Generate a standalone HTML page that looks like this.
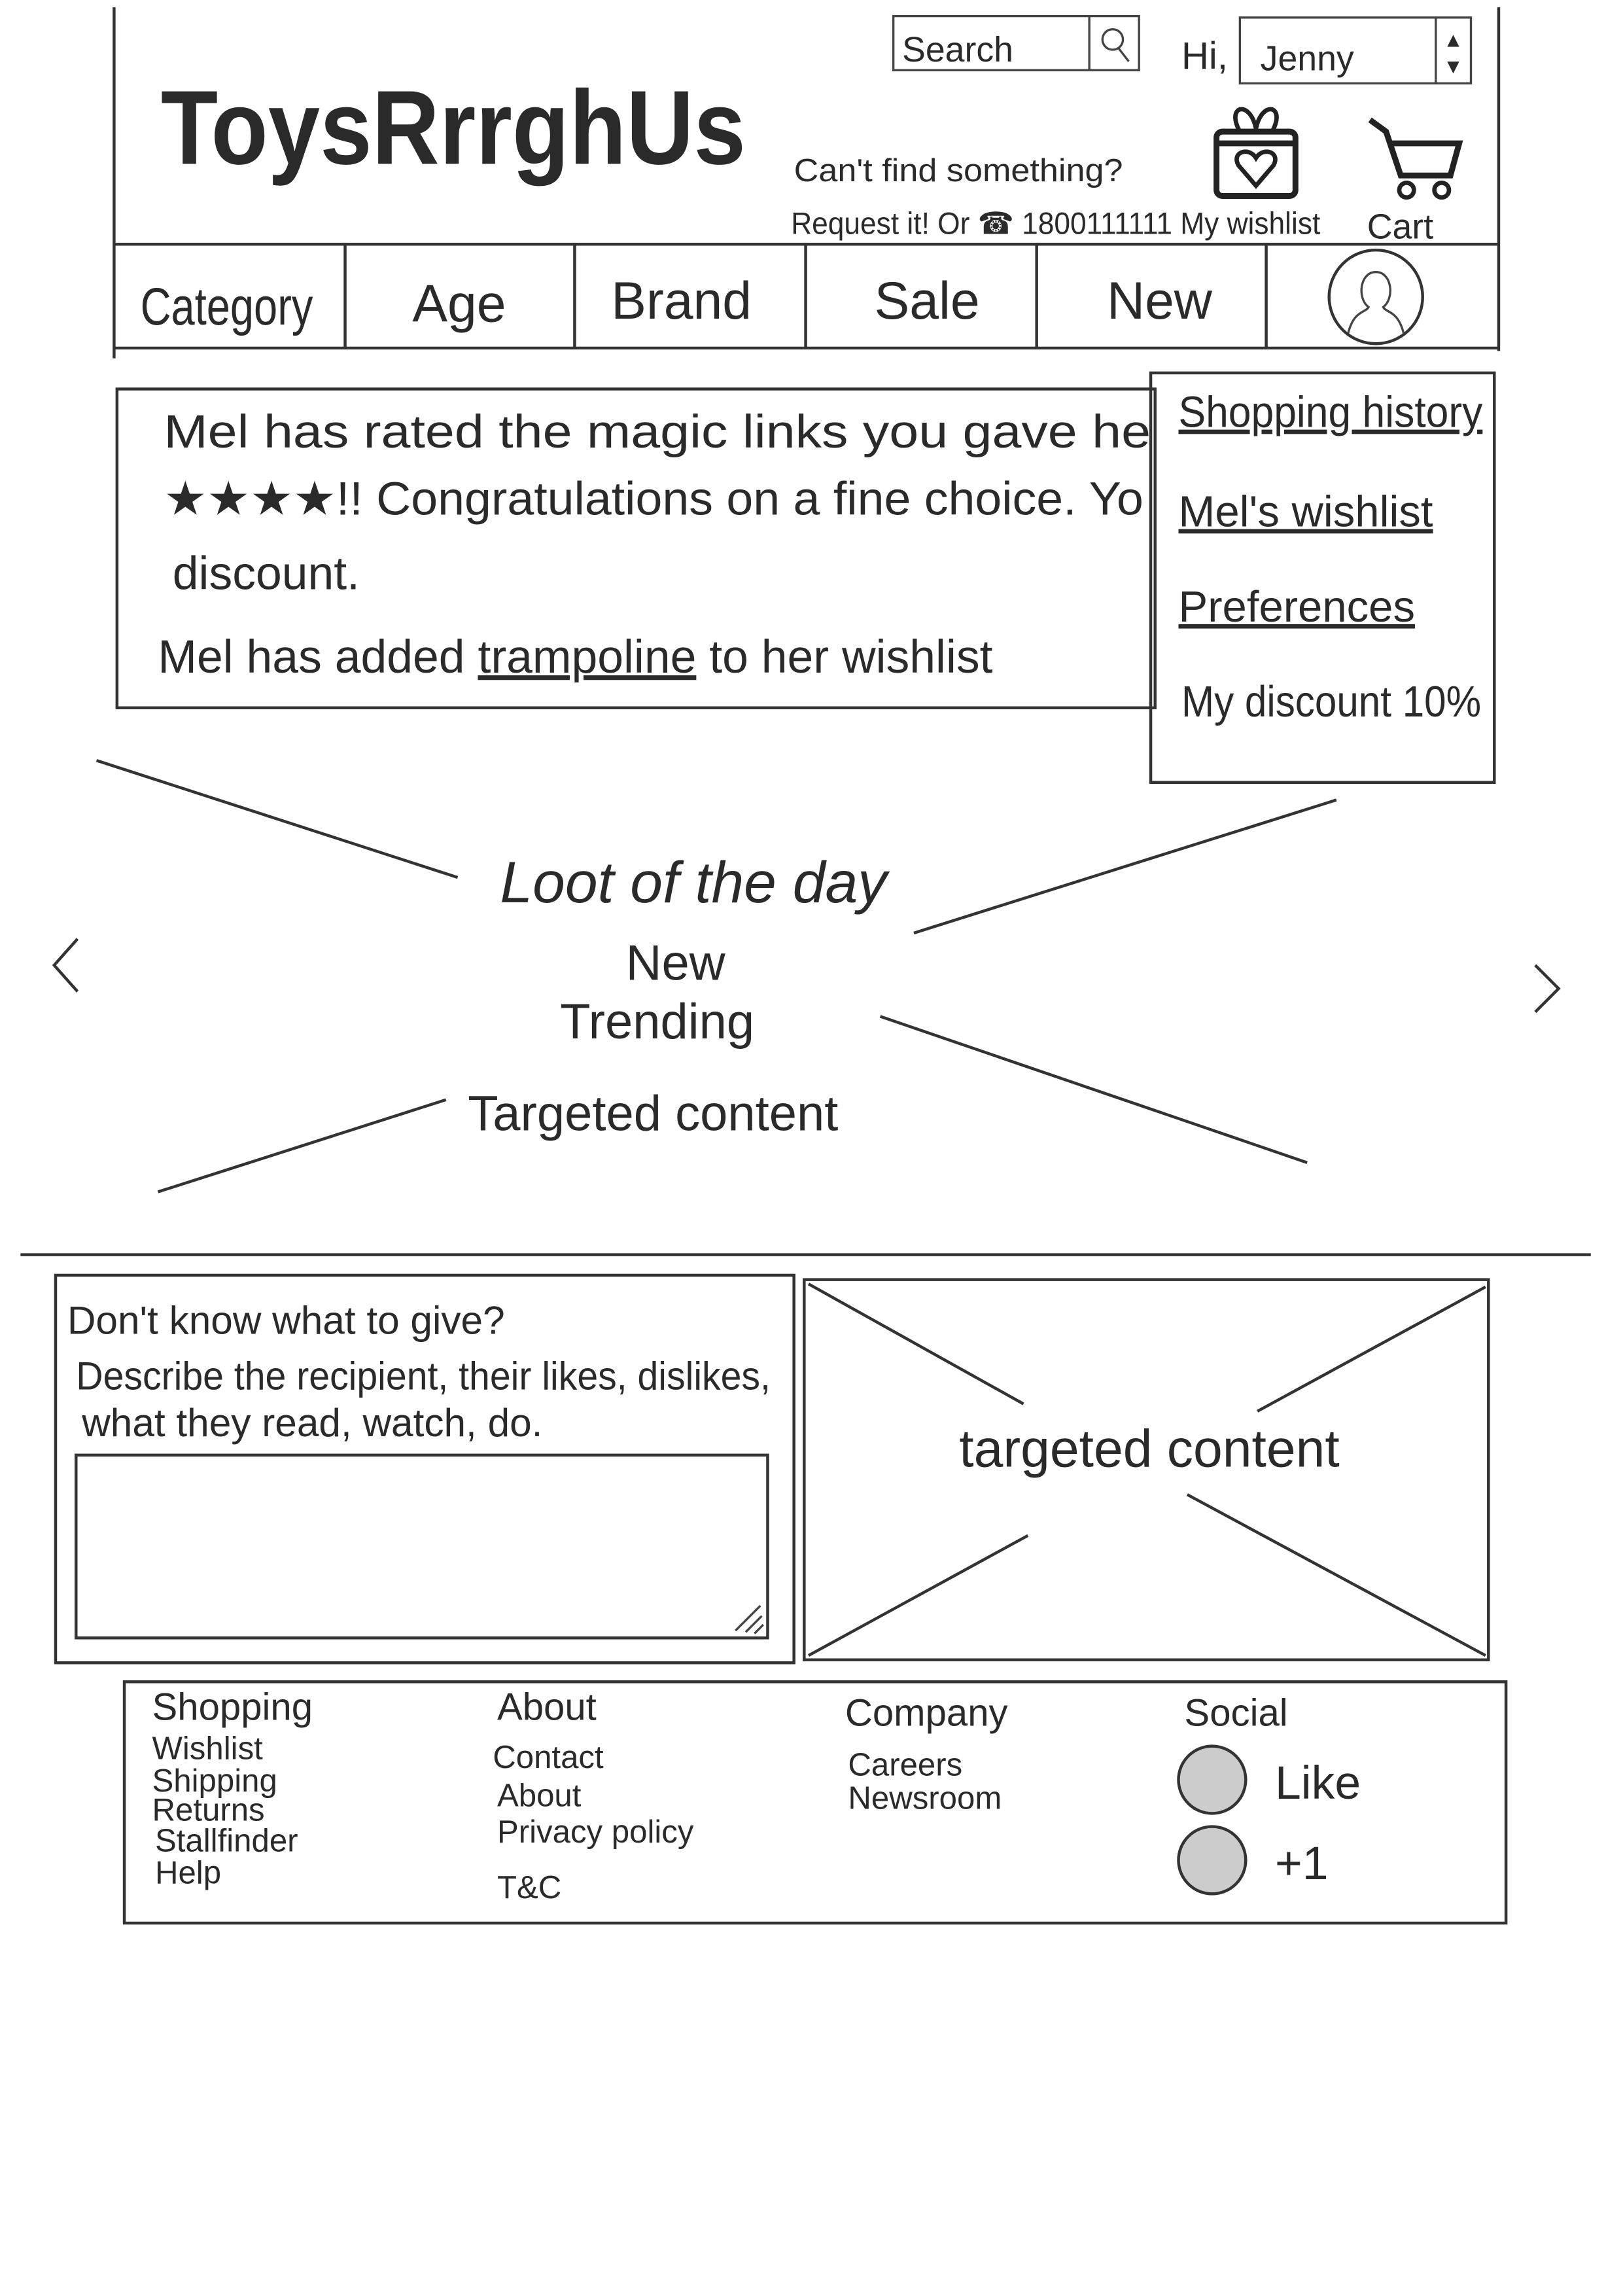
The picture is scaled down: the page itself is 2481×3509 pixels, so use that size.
<!DOCTYPE html>
<html><head><meta charset="utf-8"><style>
html,body{margin:0;padding:0;background:#fff;}
svg{display:block}
text{font-family:"Liberation Sans",sans-serif;fill:#2a2a2a}
.l{stroke:#333;stroke-width:2;fill:none}
.t{stroke:#444;stroke-width:1.5;fill:none}
</style></head><body>
<svg width="2481" height="3509" viewBox="0 0 1110 1570" xmlns="http://www.w3.org/2000/svg">
<rect width="1110" height="1570" fill="#fff"/>
<line class="l" x1="78" y1="5" x2="78" y2="245"/>
<line class="l" x1="1025" y1="5" x2="1025" y2="240"/>
<line class="l" x1="78" y1="167" x2="1025" y2="167"/>
<text x="110" y="112" font-size="72" font-weight="bold" textLength="400" lengthAdjust="spacingAndGlyphs" fill="#222">ToysRrrghUs</text>
<rect class="t" x="611" y="11" width="168" height="37"/>
<line class="t" x1="745" y1="11" x2="745" y2="48"/>
<text x="617" y="42" font-size="24">Search</text>
<circle class="t" cx="761" cy="27" r="7"/><line class="t" x1="765" y1="33" x2="772" y2="42"/>
<text x="808" y="47" font-size="26">Hi,</text>
<rect class="t" x="848" y="12" width="158" height="45"/>
<line class="t" x1="982" y1="12" x2="982" y2="57"/>
<text x="862" y="48" font-size="24">Jenny</text>
<text x="987" y="32" font-size="14">▲</text><text x="987" y="50" font-size="14">▼</text>
<text x="543" y="124" font-size="22" textLength="225" lengthAdjust="spacingAndGlyphs">Can't find something?</text>
<text x="541" y="160" font-size="21" textLength="362" lengthAdjust="spacingAndGlyphs">Request it! Or ☎ 1800111111 My wishlist</text>
<rect x="832" y="90" width="54" height="44" rx="4" fill="none" stroke="#222" stroke-width="4"/>
<line x1="832" y1="98" x2="886" y2="98" stroke="#222" stroke-width="4"/>
<path d="M848 90 C838 72 855 68 859 88 C863 68 880 72 870 90" fill="none" stroke="#222" stroke-width="3"/>
<path d="M859 127 L847 113 C842 104 854 100 859 108 C864 100 876 104 871 113 Z" fill="none" stroke="#222" stroke-width="3"/>
<path d="M937 82 L948 90 L958 120 L992 120 L998 98 L950 98" fill="none" stroke="#222" stroke-width="4"/>
<circle cx="962" cy="130" r="5" fill="none" stroke="#222" stroke-width="3"/><circle cx="986" cy="130" r="5" fill="none" stroke="#222" stroke-width="3"/>
<text x="935" y="163" font-size="24">Cart</text>
<line class="l" x1="78" y1="238" x2="1025" y2="238"/>
<g class="l"><line x1="236" y1="167" x2="236" y2="238"/><line x1="393" y1="167" x2="393" y2="238"/><line x1="551" y1="167" x2="551" y2="238"/><line x1="709" y1="167" x2="709" y2="238"/><line x1="866" y1="167" x2="866" y2="238"/></g>
<g font-size="36"><text x="96" y="222" textLength="118" lengthAdjust="spacingAndGlyphs">Category</text><text x="282" y="220">Age</text><text x="418" y="218">Brand</text><text x="598" y="218">Sale</text><text x="757" y="218">New</text></g>
<circle class="l" cx="941" cy="203" r="32"/>
<path class="t" d="M922 228 C926 212 934 214 936 210 C928 204 930 186 941 186 C952 186 954 204 946 210 C948 214 956 212 960 228"/>
<rect class="l" x="80" y="266" width="710" height="218"/>
<g font-size="32"><text x="112" y="306" textLength="675" lengthAdjust="spacingAndGlyphs">Mel has rated the magic links you gave he</text>
<text x="112" y="352" textLength="670" lengthAdjust="spacingAndGlyphs">★★★★!! Congratulations on a fine choice. Yo</text>
<text x="118" y="403">discount.</text>
<text x="108" y="460">Mel has added <tspan text-decoration="underline">trampoline</tspan> to her wishlist</text></g>
<rect class="l" x="787" y="255" width="235" height="280" fill="#fff"/>
<g font-size="30"><text x="806" y="292" text-decoration="underline" textLength="208" lengthAdjust="spacingAndGlyphs">Shopping history</text>
<text x="806" y="360" text-decoration="underline">Mel's wishlist</text>
<text x="806" y="425" text-decoration="underline">Preferences</text>
<text x="808" y="490" textLength="205" lengthAdjust="spacingAndGlyphs">My discount 10%</text></g>
<g class="l"><line x1="66" y1="520" x2="313" y2="600"/><line x1="625" y1="638" x2="914" y2="547"/><line x1="108" y1="815" x2="305" y2="752"/><line x1="602" y1="695" x2="894" y2="795"/></g>
<text x="342" y="617" font-size="40" font-family="Liberation Serif,serif" font-style="italic" fill="#555">Loot of the day</text>
<text x="428" y="670" font-size="34" fill="#333">New</text>
<text x="383" y="710" font-size="34" fill="#333">Trending</text>
<text x="320" y="773" font-size="34" fill="#333">Targeted content</text>
<path class="l" d="M53 642 L37 660 L53 678"/>
<path class="l" d="M1050 660 L1066 676 L1050 692"/>
<line class="l" x1="14" y1="858" x2="1088" y2="858"/>
<rect class="l" x="38" y="872" width="505" height="265"/>
<g font-size="27"><text x="46" y="912">Don't know what to give?</text>
<text x="52" y="950" textLength="475" lengthAdjust="spacingAndGlyphs">Describe the recipient, their likes, dislikes,</text>
<text x="56" y="982">what they read, watch, do.</text></g>
<rect class="l" x="52" y="995" width="473" height="125"/>
<g class="t"><line x1="503" y1="1115" x2="520" y2="1098"/><line x1="510" y1="1116" x2="521" y2="1105"/><line x1="516" y1="1117" x2="522" y2="1111"/></g>
<rect class="l" x="550" y="875" width="468" height="260"/>
<g class="l"><line x1="553" y1="878" x2="700" y2="960"/><line x1="1016" y1="880" x2="860" y2="965"/><line x1="553" y1="1132" x2="703" y2="1050"/><line x1="1016" y1="1132" x2="812" y2="1022"/></g>
<text x="656" y="1003" font-size="36">targeted content</text>
<rect class="l" x="85" y="1150" width="945" height="165"/>
<g font-size="22"><text x="104" y="1176" font-size="26">Shopping</text>
<text x="104" y="1203">Wishlist</text><text x="104" y="1225">Shipping</text><text x="104" y="1245">Returns</text><text x="106" y="1266">Stallfinder</text><text x="106" y="1288">Help</text>
<text x="340" y="1176" font-size="26">About</text>
<text x="337" y="1209">Contact</text><text x="340" y="1235">About</text><text x="340" y="1260">Privacy policy</text><text x="340" y="1298">T&amp;C</text>
<text x="578" y="1180" font-size="26" fill="#555">Company</text>
<text x="580" y="1214">Careers</text><text x="580" y="1237">Newsroom</text>
<text x="810" y="1180" font-size="26" fill="#555">Social</text></g>
<circle cx="829" cy="1217" r="23" fill="#ccc" stroke="#333" stroke-width="2"/>
<circle cx="829" cy="1272" r="23" fill="#ccc" stroke="#333" stroke-width="2"/>
<text x="872" y="1230" font-size="32">Like</text>
<text x="872" y="1285" font-size="32">+1</text>
</svg>
</body></html>
